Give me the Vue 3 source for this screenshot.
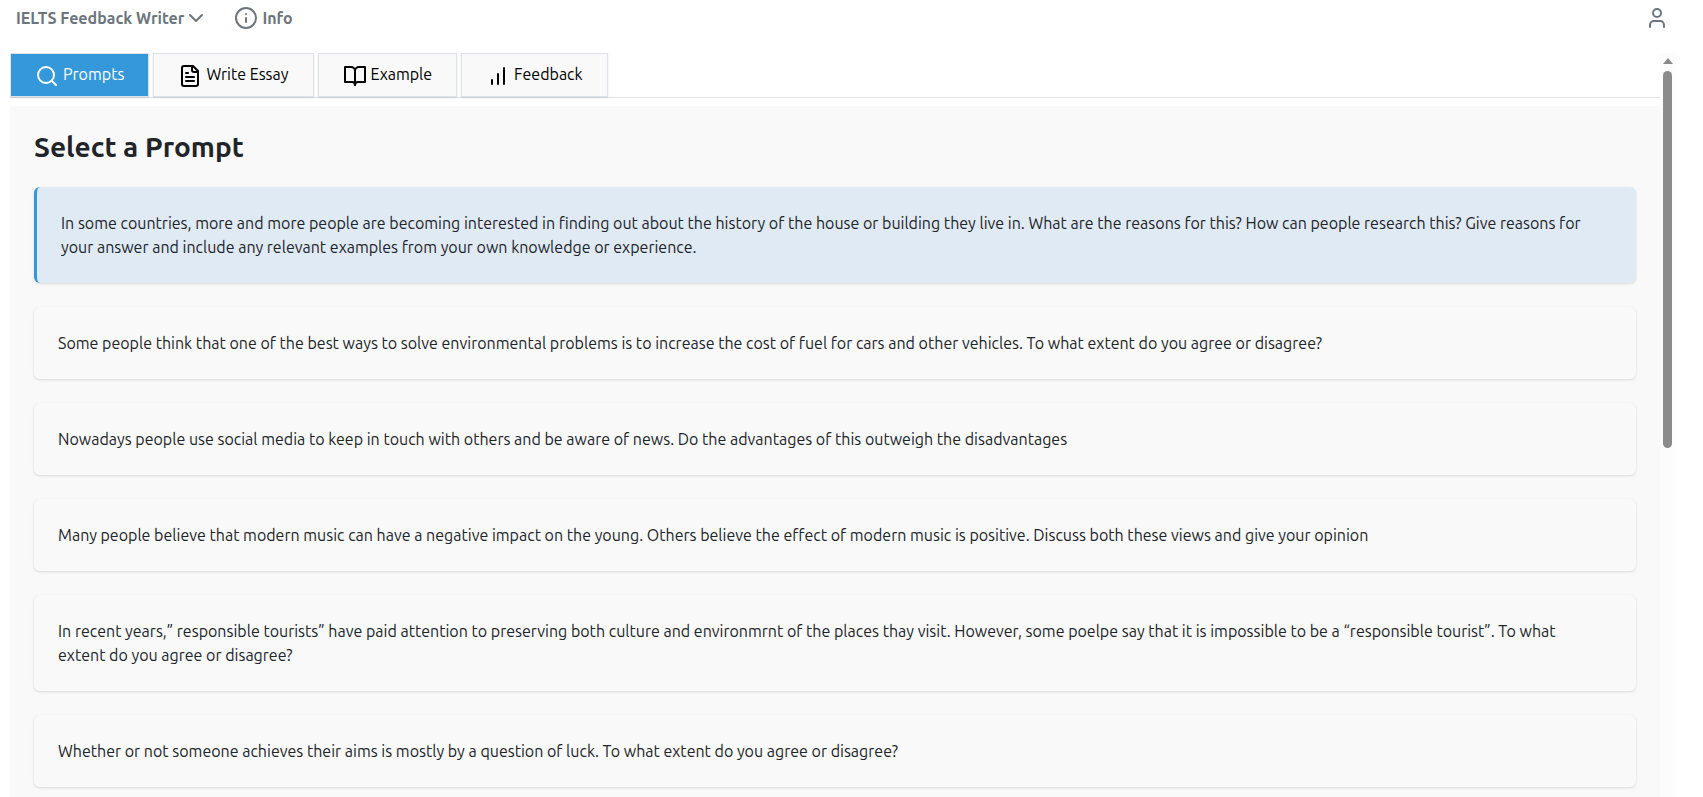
<script setup>
import { ref } from 'vue'

const activeTab = ref('prompts')
const selected = ref(0)

const tabs = [
  { id: 'prompts', label: 'Prompts' },
  { id: 'essay', label: 'Write Essay' },
  { id: 'example', label: 'Example' },
  { id: 'feedback', label: 'Feedback' },
]

const icons = {
  prompts: ['M19 11a8 8 0 1 1-16 0a8 8 0 0 1 16 0', 'M21 21l-4.3-4.3'],
  essay: [
    'M15 2H6a2 2 0 0 0-2 2v16a2 2 0 0 0 2 2h12a2 2 0 0 0 2-2V7Z',
    'M14 2v4a2 2 0 0 0 2 2h4',
    'M10 9H8',
    'M16 13H8',
    'M16 17H8',
  ],
  example: [
    'M2 3h6a4 4 0 0 1 4 4v14a3 3 0 0 0-3-3H2z',
    'M22 3h-6a4 4 0 0 0-4 4v14a3 3 0 0 1 3-3h7z',
  ],
  feedback: ['M12 20V10', 'M18 20V4', 'M6 20v-4'],
}

const prompts = [
  'In some countries, more and more people are becoming interested in finding out about the history of the house or building they live in. What are the reasons for this? How can people research this? Give reasons for your answer and include any relevant examples from your own knowledge or experience.',
  'Some people think that one of the best ways to solve environmental problems is to increase the cost of fuel for cars and other vehicles. To what extent do you agree or disagree?',
  'Nowadays people use social media to keep in touch with others and be aware of news. Do the advantages of this outweigh the disadvantages',
  'Many people believe that modern music can have a negative impact on the young. Others believe the effect of modern music is positive. Discuss both these views and give your opinion',
  'In recent years,” responsible tourists” have paid attention to preserving both culture and environmrnt of the places thay visit. However, some poelpe say that it is impossible to be a “responsible tourist”. To what extent do you agree or disagree?',
  'Whether or not someone achieves their aims is mostly by a question of luck. To what extent do you agree or disagree?',
]
</script>

<template>
  <div class="app">
    <header class="topbar">
      <button class="nav brand" type="button">
        IELTS Feedback Writer
        <svg class="chevron" viewBox="0 0 16 16" aria-hidden="true"><path d="M2 5l6 6 6-6" /></svg>
      </button>
      <button class="nav" type="button">
        <svg class="icon" viewBox="0 0 24 24" aria-hidden="true">
          <circle cx="12" cy="12" r="10" />
          <path d="M12 16v-4M12 8h.01" />
        </svg>
        Info
      </button>
      <button class="nav account" type="button" aria-label="Account">
        <svg class="icon" viewBox="0 0 24 24" aria-hidden="true">
          <path d="M19 21v-2a4 4 0 0 0-4-4H9a4 4 0 0 0-4 4v2" />
          <circle cx="12" cy="7" r="4" />
        </svg>
      </button>
    </header>

    <div class="body">
      <main class="content">
        <nav class="tabs" role="tablist">
          <button
            v-for="tab in tabs"
            :key="tab.id"
            type="button"
            role="tab"
            class="tab"
            :class="{ active: tab.id === activeTab }"
            :aria-selected="tab.id === activeTab"
            @click="activeTab = tab.id"
          >
            <svg class="icon" viewBox="0 0 24 24" aria-hidden="true">
              <path v-for="d in icons[tab.id]" :key="d" :d="d" />
            </svg>
            <span>{{ tab.label }}</span>
          </button>
        </nav>

        <section class="panel">
          <h1>Select a Prompt</h1>
          <button
            v-for="(prompt, i) in prompts"
            :key="i"
            type="button"
            class="card"
            :class="{ selected: i === selected }"
            :aria-pressed="i === selected"
            @click="selected = i"
          >
            {{ prompt }}
          </button>
        </section>
      </main>

      <div class="scrollbar" aria-hidden="true">
        <svg class="arrow" viewBox="0 0 10 6"><path d="M5 0l5 6H0z" /></svg>
        <div class="thumb"></div>
      </div>
    </div>
  </div>
</template>

<style>
body {
  background: #fff;
}
</style>

<style scoped>
.app {
  display: flex;
  flex-direction: column;
  height: 100vh;
  overflow: hidden;
  font-family: Ubuntu, "Noto Sans", sans-serif;
  font-size: 16px;
  line-height: 24px;
  color: #212529;
}

button {
  font: inherit;
  cursor: pointer;
}

.icon {
  width: 24px;
  height: 24px;
  flex: none;
}

.icon,
.chevron {
  fill: none;
  stroke: currentColor;
  stroke-width: 2;
  stroke-linecap: round;
  stroke-linejoin: round;
}

.topbar {
  display: flex;
  align-items: center;
  gap: 30px;
  height: 36px;
  margin-bottom: 17px;
  padding: 0 34px 0 16px;
}

.nav {
  display: flex;
  align-items: center;
  gap: 4px;
  padding: 0;
  border: 0;
  background: none;
  color: #6c757d;
  font-weight: 700;
}

.chevron {
  width: 16px;
  height: 16px;
}

.account {
  margin-left: auto;
}

.body {
  flex: 1;
  min-height: 0;
  display: flex;
  padding: 0 28px 0 10px;
}

.content {
  flex: 1;
  min-width: 0;
  display: flex;
  flex-direction: column;
  overflow-y: auto;
  scrollbar-width: none;
}

.tabs {
  display: flex;
  gap: 4px;
  margin-bottom: 8px;
  border-bottom: 1px solid #dee2e6;
}

.tab {
  display: flex;
  align-items: center;
  gap: 4px;
  height: 44px;
  padding: 2px 24px 0;
  border: 1px solid #dee2e6;
  background: #f9f9f9;
  box-shadow: 0 1px 2px rgba(0, 0, 0, 0.1);
  color: #000;
}

.tab span {
  padding-bottom: 4px;
}

.tab.active {
  background: #3498db;
  color: #fff;
}

.panel {
  flex: 1 0 auto;
  display: flex;
  flex-direction: column;
  gap: 24px;
  padding: 24px;
  background: #f9f9f9;
}

h1 {
  margin: 0;
  font-size: 28px;
  line-height: 33px;
  font-weight: 600;
}

.card {
  padding: 24px 32px 24px 24px;
  border: 0;
  border-radius: 6px;
  background: #f9f9f9;
  box-shadow: 0 1px 3px rgba(0, 0, 0, 0.12);
  color: inherit;
  text-align: left;
}

.card.selected {
  border-left: 3px solid #3498db;
  background: #e0eaf5;
}

.scrollbar {
  width: 15px;
  flex: none;
  display: flex;
  flex-direction: column;
  align-items: center;
  gap: 7px;
  padding-top: 5px;
  background: #fcfcfc;
}

.arrow {
  width: 10px;
  height: 6px;
  flex: none;
  fill: #8b8b8b;
}

.thumb {
  width: 9px;
  height: 51%;
  border-radius: 5px;
  background: #8b8b8b;
}
</style>
